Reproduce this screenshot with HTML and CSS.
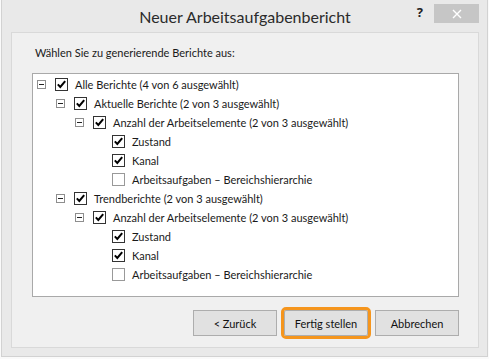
FILE: index.html
```html
<!DOCTYPE html>
<html>
<head>
<title>Neuer Arbeitsaufgabenbericht</title>
<link rel="stylesheet" href="styles.css">
</head>
<body>

<div class="window">
	<div class="titlebar">
		<div></div>
		<div class="title">Neuer Arbeitsaufgabenbericht</div>
		<div class="tools">
			<span class="help">?</span>
			<span class="close">
				<svg width="10" height="10" viewBox="0 0 10 10"><path d="M1 1 L9 9 M9 1 L1 9" stroke="#fff" stroke-width="1.4"/></svg>
			</span>
		</div>
	</div><!-- end titlebar -->

	<div class="panel">
		<div class="intro">Wählen Sie zu generierende Berichte aus:</div>

		<div class="tree">
			<div class="row lv0"><span class="exp"></span><span class="cb on"></span><span class="txt">Alle Berichte (4 von 6 ausgewählt)</span></div>
			<div class="row lv1"><span class="exp"></span><span class="cb on"></span><span class="txt">Aktuelle Berichte (2 von 3 ausgewählt)</span></div>
			<div class="row lv2"><span class="exp"></span><span class="cb on"></span><span class="txt">Anzahl der Arbeitselemente (2 von 3 ausgewählt)</span></div>
			<div class="row lv3"><span class="cb on"></span><span class="txt">Zustand</span></div>
			<div class="row lv3"><span class="cb on"></span><span class="txt">Kanal</span></div>
			<div class="row lv3"><span class="cb"></span><span class="txt">Arbeitsaufgaben – Bereichshierarchie</span></div>
			<div class="row lv1"><span class="exp"></span><span class="cb on"></span><span class="txt">Trendberichte (2 von 3 ausgewählt)</span></div>
			<div class="row lv2"><span class="exp"></span><span class="cb on"></span><span class="txt">Anzahl der Arbeitselemente (2 von 3 ausgewählt)</span></div>
			<div class="row lv3"><span class="cb on"></span><span class="txt">Zustand</span></div>
			<div class="row lv3"><span class="cb on"></span><span class="txt">Kanal</span></div>
			<div class="row lv3"><span class="cb"></span><span class="txt">Arbeitsaufgaben – Bereichshierarchie</span></div>
		</div><!-- end tree -->

		<div class="buttons">
			<button>&lt; Zurück</button>
			<button class="focus">Fertig stellen</button>
			<button>Abbrechen</button>
		</div>
	</div><!-- end panel -->
</div><!-- end window -->

</body>
</html>
```

FILE: styles.css
```css
body {
margin: 0;
background: #fafafa;
font-family: Lato, "Noto Sans", sans-serif;
font-size: 11px;
color: #1a1a1a;
}

.window {
box-sizing: border-box;
width: 487px;
height: 357px;
margin-left: 1px;
border: solid #d2d2d2 1px;
border-top: none;
background: #e9e9e9;
padding: 0 8px 8px 9px;
}

.titlebar {
display: grid;
grid-template-columns: 1fr auto 1fr;
height: 32px;
}

.title {
font-size: 16px;
color: #2b2b2b;
padding-top: 7px;
}

.tools {
display: flex;
justify-content: flex-end;
align-items: flex-start;
}

.help {
font-family: "Noto Sans", sans-serif;
font-weight: bold;
font-size: 13px;
color: #222;
margin: 3px 11px 0 0;
}

.close {
display: flex;
align-items: center;
justify-content: center;
width: 45px;
height: 19px;
margin-top: 4px;
background: #c6c6c6;
}

.panel {
box-sizing: border-box;
height: 316px;
border: solid #d9d9d9 1px;
background: #f0f0f0;
padding: 12px 19px 0 20px;
}

.intro {
padding-left: 3px;
line-height: 16px;
}

.tree {
box-sizing: border-box;
height: 224px;
margin-top: 12px;
background: #fff;
border: solid #a9a9a9 1px;
padding: 1px 0 0 4px;
}

.row {
display: flex;
align-items: center;
height: 19px;
white-space: nowrap;
}

.lv1 { padding-left: 19px; }
.lv2 { padding-left: 38px; }
.lv3 { padding-left: 75px; }

.exp {
box-sizing: border-box;
position: relative;
width: 9px;
height: 9px;
border: solid #8e8e8e 1px;
margin-right: 9px;
}

.exp::after {
content: "";
position: absolute;
left: 1px;
top: 3px;
width: 5px;
height: 1px;
background: #222;
}

.cb {
box-sizing: border-box;
width: 13px;
height: 13px;
border: solid #999 1px;
background: #fff;
margin-right: 7px;
}

.cb.on {
border-color: #333;
background: #fff url("data:image/svg+xml;utf8,<svg xmlns='http://www.w3.org/2000/svg' width='11' height='11' viewBox='0 0 11 11'><path d='M1.8 5.4 L4.3 8 L9.2 2.2' fill='none' stroke='black' stroke-width='2'/></svg>") no-repeat center;
}

.buttons {
display: flex;
justify-content: flex-end;
gap: 7px;
margin-top: 13px;
}

button {
box-sizing: border-box;
width: 84px;
height: 26px;
font-family: inherit;
font-size: 11px;
color: #111;
background: #e1e1e1;
border: solid #adadad 1px;
padding: 0;
}

button.focus {
outline: 3px solid #f5951d;
outline-offset: 0;
border-radius: 2px;
}
```
